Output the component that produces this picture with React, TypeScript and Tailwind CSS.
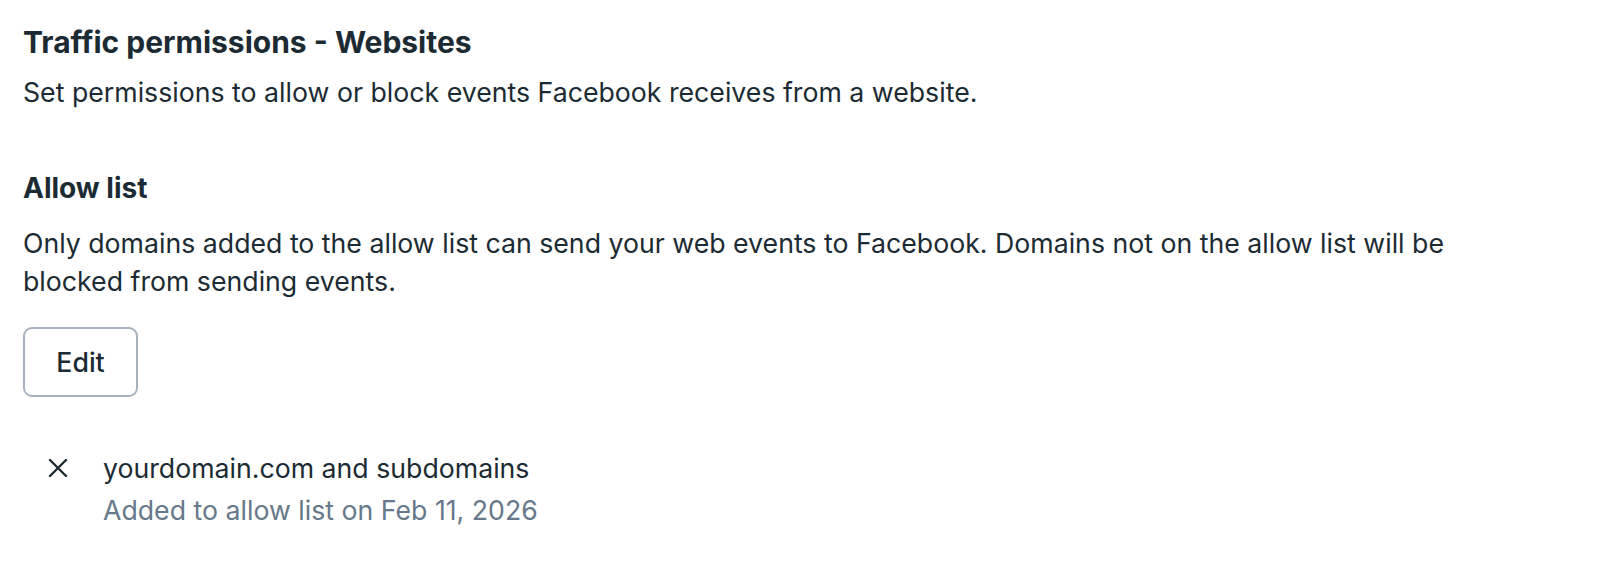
import React from 'react';

const font = { fontFamily: 'Inter, "Noto Sans", sans-serif' };

function CloseIcon() {
  return (
    <svg width="20" height="18" viewBox="0 0 20 18" fill="none">
      <path d="M2 1L18 17M18 1L2 17" stroke="#1c2b33" strokeWidth="2.4" strokeLinecap="round" />
    </svg>
  );
}

export default function App() {
  return (
    <div className="min-h-screen bg-white text-[#1c2b33] px-[23px] pt-[24px]" style={font}>
      {/* Section header */}
      <h1 className="text-[30px] leading-[36px] font-bold">Traffic permissions - Websites</h1>
      <p className="mt-[12px] text-[26.7px] leading-[40px]">
        Set permissions to allow or block events Facebook receives from a website.
      </p>

      {/* Allow list */}
      <h2 className="mt-[58px] text-[28px] leading-[36px] font-bold">Allow list</h2>
      <p className="mt-[18px] text-[26.7px] leading-[38px] max-w-[1480px]">
        Only domains added to the allow list can send your web events to Facebook. Domains not on the allow list will be
        blocked from sending events.
      </p>

      <button className="mt-[27px] w-[115px] h-[70px] flex items-center justify-center rounded-[9px] border-2 border-[#a8b2bd] bg-white text-[26.7px] font-medium">
        Edit
      </button>

      {/* Domain row */}
      <div className="mt-[51px] flex">
        <div className="w-[80px] h-[40px] flex items-center pl-[25px]">
          <CloseIcon />
        </div>
        <div className="text-[26.7px] leading-[40px]">
          <div>yourdomain.com and subdomains</div>
          <div className="mt-[2px] text-[#67788a]">Added to allow list on Feb 11, 2026</div>
        </div>
      </div>
    </div>
  );
}
